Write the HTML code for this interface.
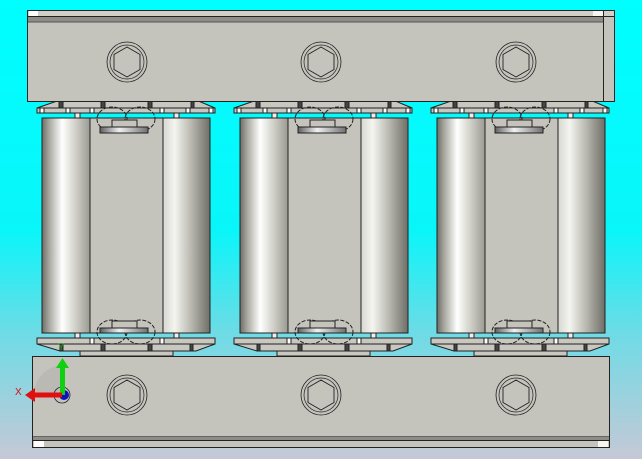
<!DOCTYPE html><html><head><style>html,body{margin:0;padding:0;width:642px;height:459px;overflow:hidden}</style></head><body>
<svg width="642" height="459" viewBox="0 0 642 459" xmlns="http://www.w3.org/2000/svg" font-family="Liberation Sans, sans-serif">
<defs>
<linearGradient id="bg" x1="0" y1="0" x2="0" y2="1">
<stop offset="0" stop-color="#00ffff"/><stop offset="0.5" stop-color="#08f6fa"/><stop offset="0.72" stop-color="#6cdce6"/><stop offset="1" stop-color="#c6c8d6"/></linearGradient>
<linearGradient id="cyl" x1="0" y1="0" x2="1" y2="0">
<stop offset="0" stop-color="#6e6e68"/><stop offset="0.15" stop-color="#a8a8a0"/><stop offset="0.42" stop-color="#ffffff"/><stop offset="0.7" stop-color="#d0d0c8"/><stop offset="1" stop-color="#9a9a94"/></linearGradient>
<linearGradient id="cyl2" x1="0" y1="0" x2="1" y2="0">
<stop offset="0" stop-color="#d8d8d2"/><stop offset="0.25" stop-color="#f4f4f0"/><stop offset="0.6" stop-color="#b8b8b0"/><stop offset="1" stop-color="#6e6e68"/></linearGradient>
<linearGradient id="bar" x1="0" y1="0" x2="1" y2="0">
<stop offset="0" stop-color="#606060"/><stop offset="0.4" stop-color="#f0f0f0"/><stop offset="1" stop-color="#707070"/></linearGradient>
<g id="hex"><circle r="20" fill="none" stroke="#222" stroke-width="0.8"/><circle r="17" fill="none" stroke="#222" stroke-width="0.7"/><polygon points="0,-15 13,-7.5 13,7.5 0,15 -13,7.5 -13,-7.5" fill="none" stroke="#222" stroke-width="0.9"/></g>
<g id="unit" stroke="#222" stroke-width="1">
<rect x="0" y="0" width="48" height="215" fill="url(#cyl)"/>
<rect x="48" y="0" width="73" height="215" fill="#c4c3bc"/>
<rect x="121" y="0" width="47" height="215" fill="url(#cyl2)"/>
<g fill="none" stroke-dasharray="4 1.5">
<ellipse cx="70" cy="1" rx="15" ry="12"/><ellipse cx="98" cy="1" rx="15" ry="12"/>
<ellipse cx="70" cy="214" rx="15" ry="12"/><ellipse cx="98" cy="214" rx="15" ry="12"/></g>
<rect x="70" y="2" width="25" height="7" fill="#c4c3bc"/>
<rect x="58" y="9" width="48" height="6" fill="url(#bar)"/>
<rect x="70" y="203" width="25" height="7" fill="#c4c3bc"/>
<rect x="58" y="210" width="48" height="5" fill="url(#bar)"/>
</g>
</defs>
<rect width="642" height="459" fill="url(#bg)"/>
<g stroke="#222" stroke-width="1">
<g id="tp">
<polygon points="37,108 60,100 196,100 215,108 215,113 37,113" fill="#c8c7c0"/>
<line x1="37" y1="108" x2="215" y2="108"/>
<rect x="59" y="100" width="4" height="8" fill="#444"/><rect x="101" y="100" width="4" height="8" fill="#444"/><rect x="148" y="100" width="4" height="8" fill="#444"/><rect x="191" y="100" width="3" height="8" fill="#444"/>
<rect x="40" y="108" width="4" height="5" fill="#fff"/><rect x="66" y="108" width="4" height="5" fill="#fff"/><rect x="90" y="108" width="4" height="5" fill="#fff"/><rect x="160" y="108" width="4" height="5" fill="#fff"/><rect x="186" y="108" width="4" height="5" fill="#fff"/><rect x="209" y="108" width="4" height="5" fill="#fff"/>
<rect x="75" y="113" width="5" height="5" fill="#eee"/><rect x="174" y="113" width="5" height="5" fill="#eee"/>
</g>
<use href="#tp" x="197"/><use href="#tp" x="394"/>
<g id="bp">
<rect x="80" y="347" width="93" height="9" fill="#c8c7c0"/>
<polygon points="37,338 215,338 215,344 196,351 60,351 37,344" fill="#c8c7c0"/>
<line x1="37" y1="344" x2="215" y2="344"/>
<rect x="60" y="344" width="3" height="7" fill="#444"/><rect x="101" y="344" width="4" height="7" fill="#444"/><rect x="148" y="344" width="4" height="7" fill="#444"/><rect x="190" y="344" width="3" height="7" fill="#444"/>
<rect x="75" y="333" width="5" height="5" fill="#eee"/><rect x="174" y="333" width="5" height="5" fill="#eee"/>
<rect x="90" y="338" width="4" height="6" fill="#fff"/><rect x="160" y="338" width="4" height="6" fill="#fff"/>
</g>
<use href="#bp" x="197"/><use href="#bp" x="394"/>
</g>
<use href="#unit" x="42" y="118"/><use href="#unit" x="240" y="118"/><use href="#unit" x="437" y="118"/>
<g stroke="#222" stroke-width="1">
<rect x="27.5" y="10.5" width="587" height="91" fill="#c4c3bc"/>
<rect x="28" y="11" width="586" height="5" fill="#d0cfc8" stroke="none"/>
<line x1="28" y1="16.5" x2="614" y2="16.5"/>
<rect x="28" y="17" width="575" height="5" fill="#8e8d88" stroke="none"/>
<line x1="28" y1="22" x2="603" y2="22" stroke="#555"/>
<line x1="603.5" y1="11" x2="603.5" y2="101"/>
<rect x="29" y="11" width="9" height="5" fill="#fff" stroke="none"/>
<rect x="593" y="11" width="10" height="5" fill="#f4f4f0" stroke="none"/>
<rect x="32.5" y="356.5" width="577" height="91" fill="#c4c3bc"/>
<rect x="33" y="437" width="576" height="3" fill="#8e8d88" stroke="none"/>
<line x1="33" y1="436.5" x2="609" y2="436.5" stroke="#666"/>
<line x1="33" y1="440.5" x2="609" y2="440.5"/>
<rect x="34" y="441" width="10" height="6" fill="#fff" stroke="none"/>
<rect x="598" y="441" width="10" height="6" fill="#f4f4f0" stroke="none"/>
</g>
<use href="#hex" x="127" y="62"/><use href="#hex" x="321" y="62"/><use href="#hex" x="516" y="62"/>
<use href="#hex" x="127" y="395"/><use href="#hex" x="321" y="395"/><use href="#hex" x="516" y="395"/>
<path d="M62,395 L34,395 A30,30 0 0 1 62,365 Z" fill="#b0b0aa" opacity="0.5"/>
<circle cx="62" cy="395" r="8" fill="none" stroke="#223" stroke-width="0.8"/>
<circle cx="64" cy="395" r="5" fill="#1010c0"/>
<rect x="60" y="366" width="5" height="29" fill="#10d010"/>
<polygon points="56,368 62.5,358 69,368" fill="#10d010"/>
<rect x="33" y="392.5" width="29" height="5" fill="#e01010"/>
<polygon points="35,388 25,395 35,402" fill="#e01010"/>
<text x="15" y="395" font-size="10" fill="#d01010">X</text>
<text x="58" y="350" font-size="9" fill="#10b010">Y</text>
</svg>
</body></html>
